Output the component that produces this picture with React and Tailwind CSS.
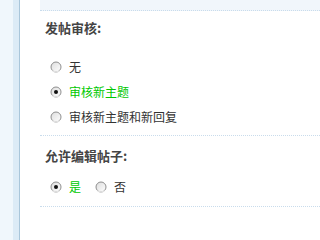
import { useState } from "react";

function Radio({ checked }) {
  return (
    <svg width="12" height="12" viewBox="0 0 12 12" className="shrink-0">
      <defs>
        <linearGradient id="rg" x1="0" y1="0" x2="1" y2="1">
          <stop offset="0" stopColor="#dcdcdc" />
          <stop offset="1" stopColor="#ffffff" />
        </linearGradient>
      </defs>
      <circle cx="6" cy="6" r="5" fill="url(#rg)" stroke="#8f8f8f" strokeWidth="1" />
      <path d="M2.5 9.5 A5 5 0 0 0 9.5 9.5" fill="none" stroke="#e4e4e4" strokeWidth="1.2" />
      {checked && <circle cx="6" cy="6" r="2" fill="#111" />}
    </svg>
  );
}

function Option({ label, checked, onPick, className = "" }) {
  return (
    <label className={`flex items-center h-[25px] cursor-pointer ${className}`} onClick={onPick}>
      <Radio checked={checked} />
      <span className={`ml-[7px] leading-[12px] ${checked ? "text-[#00c800]" : "text-[#333]"}`}>{label}</span>
    </label>
  );
}

export default function App() {
  const [audit, setAudit] = useState(1);
  const [edit, setEdit] = useState(0);
  const audits = ["无", "审核新主题", "审核新主题和新回复"];

  return (
    <div
      className="flex w-full min-h-screen bg-white text-[12px]"
      style={{ fontFamily: "'Noto Sans CJK SC', 'DejaVu Sans', sans-serif" }}
    >
      <div className="w-[13px] bg-[#f0f7fc]" />
      <div className="w-[7px] bg-[#dcebf6] border-r border-[#a9c6da]" />
      <div className="flex-1 pl-[20px]">
        <div className="h-[11px] bg-[#f1f6fb] border-b border-dotted border-[#c9dcec]" />

        <div className="pl-[5px] pt-[7px] text-[13px] font-bold leading-[20px] text-[#444]">发帖审核:</div>
        <div className="pl-[10px] pt-[16px] pb-[6px] flex flex-col">
          {audits.map((a, i) => (
            <Option key={a} label={a} checked={audit === i} onPick={() => setAudit(i)} />
          ))}
        </div>
        <div className="border-b border-dotted border-[#c9dcec]" />

        <div className="pl-[5px] pt-[10px] text-[13px] font-bold leading-[20px] text-[#444]">允许编辑帖子:</div>
        <div className="pl-[10px] pt-[8px] pb-[7px] flex items-center">
          <Option label="是" checked={edit === 0} onPick={() => setEdit(0)} />
          <Option label="否" checked={edit === 1} onPick={() => setEdit(1)} className="ml-[14px]" />
        </div>
        <div className="border-b border-dotted border-[#c9dcec]" />
      </div>
    </div>
  );
}
